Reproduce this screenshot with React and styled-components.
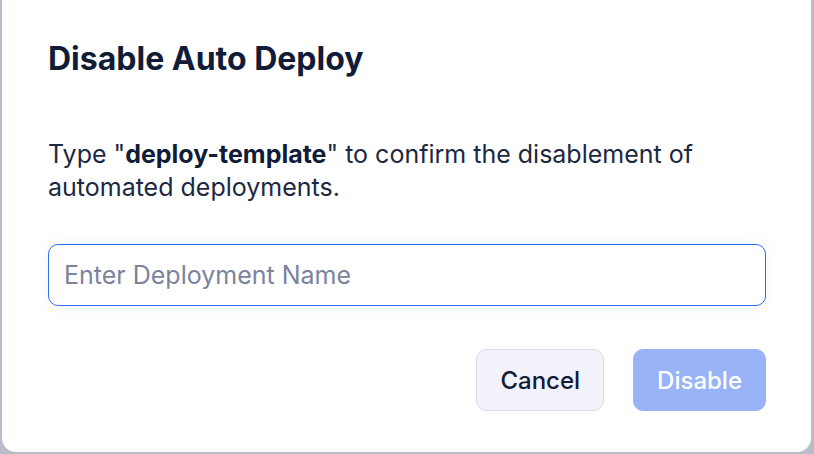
import React from 'react';
import styled, { createGlobalStyle } from 'styled-components';

const Global = createGlobalStyle`
  html, body { margin: 0; padding: 0; background: #b9bdc9; height: 100%; overflow: hidden; }
  body { font-family: Inter, "Noto Sans", sans-serif; }
`;

const Overlay = styled.div`
  width: 814px;
  height: 454px;
  padding: 0 3px 2px 2px;
  box-sizing: border-box;
  display: flex;
  align-items: flex-end;
`;

const Card = styled.div`
  width: 100%;
  height: 470px;
  background: #ffffff;
  border-radius: 14px;
  box-sizing: border-box;
  padding: 57px 45px 0 46px;
  display: flex;
  flex-direction: column;
`;

const Title = styled.h2`
  margin: 0;
  font-size: 32px;
  line-height: 40px;
  font-weight: 700;
  color: #111c38;
`;

const Text = styled.p`
  margin: 59px 0 0;
  font-size: 25px;
  line-height: 33px;
  color: #1d2842;
  b { font-weight: 700; color: #111c38; }
`;

const Input = styled.input`
  margin-top: 40px;
  height: 62px;
  box-sizing: border-box;
  border: 1px solid #2f6cf0;
  border-radius: 10px;
  padding: 0 15px;
  font-family: inherit;
  font-size: 25px;
  color: #111c38;
  outline: none;
  box-shadow: 0 0 14px rgba(120, 130, 160, 0.08);
  &::placeholder { color: #7b849d; }
`;

const Actions = styled.div`
  margin-top: 43px;
  display: flex;
  justify-content: flex-end;
  gap: 29px;
`;

const Button = styled.button`
  height: 62px;
  padding: 0 23px;
  border-radius: 10px;
  font-family: inherit;
  font-size: 24px;
  font-weight: 500;
  border: 1px solid ${p => (p.primary ? '#98b3f8' : '#dadeeb')};
  background: ${p => (p.primary ? '#98b3f8' : '#f1f2fa')};
  color: ${p => (p.primary ? '#ffffff' : '#111c38')};
`;

export default function App() {
  return (
    <>
      <Global />
      <Overlay>
        <Card>
          <Title>Disable Auto Deploy</Title>
          <Text>
            Type "<b>deploy-template</b>" to confirm the disablement of automated deployments.
          </Text>
          <Input autoFocus placeholder="Enter Deployment Name" />
          <Actions>
            <Button>Cancel</Button>
            <Button primary disabled>Disable</Button>
          </Actions>
        </Card>
      </Overlay>
    </>
  );
}
